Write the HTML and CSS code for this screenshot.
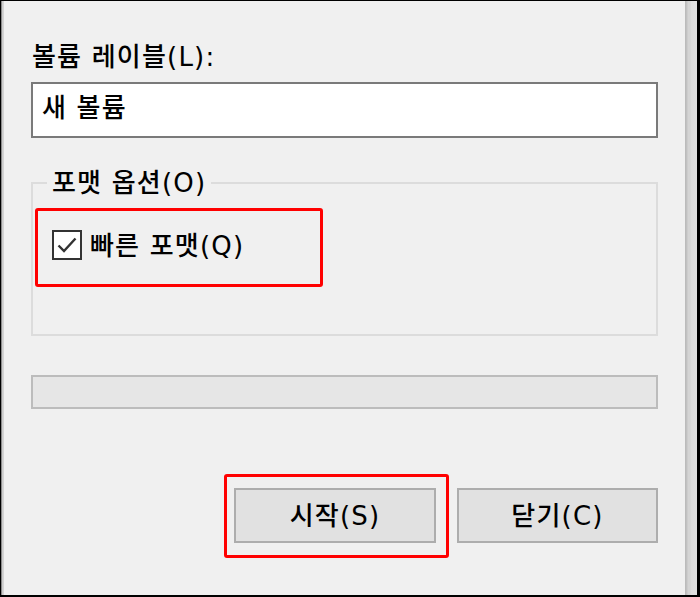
FILE: index.html
```html
<!DOCTYPE html>
<html lang="ko">
<head>
<meta charset="utf-8">
<title>포맷</title>
<link rel="stylesheet" href="styles.css">
</head>
<body>
<div class="screen">
  <div class="edge-left"></div>
  <div class="dialog">
    <div class="label">볼륨 레이블(L):</div>
    <div class="textbox">새 볼륨</div>
    <fieldset class="group">
      <legend class="legend">포맷 옵션(O)</legend>
      <div class="group-body">
        <div class="highlight hl-check">
          <div class="check-row">
            <span class="checkbox">
              <svg width="26" height="26" viewBox="0 0 26 26"><polyline points="4.5,13.5 10,19 21.5,6.5" fill="none" stroke="#333" stroke-width="2.4"/></svg>
            </span>
            <span class="check-text">빠른 포맷(Q)</span>
          </div>
        </div>
      </div>
    </fieldset>
    <div class="progress"></div>
    <div class="buttons">
      <div class="highlight hl-btn">
        <div class="btn btn-start">시작(S)</div>
      </div>
      <div class="btn btn-close">닫기(C)</div>
    </div>
  </div>
  <div class="edge-right"></div>
</div>
</body>
</html>
```
FILE: styles.css
```css
html, body {
  margin: 0;
  padding: 0;
  background: #000;
}
.screen {
  width: 700px;
  height: 597px;
  box-sizing: border-box;
  border-top: 1px solid #000;
  border-left: 1px solid #000;
  border-right: 3px solid #000;
  border-bottom: 2px solid #000;
  display: flex;
  font-family: "DejaVu Sans", "Noto Sans CJK KR", sans-serif;
  font-size: 26px;
  font-weight: 500;
  letter-spacing: 1.2px;
  color: #000;
}
.edge-left {
  width: 3px;
  background: linear-gradient(to right, #8a8a8a 0, #8a8a8a 1px, #c8c8c8 1px, #d8d8d8 3px);
}
.edge-right {
  width: 12px;
  background: linear-gradient(to right, #b8b8b8 0, #c4c4c4 2px, #d4d4d4 3px, #d4d4d4 5px, #dedede 6px, #e2e2e2 12px);
}
.dialog {
  flex: 1;
  background: #f0f0f0;
  padding: 0 27px;
  display: flex;
  flex-direction: column;
}
.label {
  margin-top: 40px;
  height: 32px;
  line-height: 32px;
  padding-left: 1px;
}
.textbox {
  margin-top: 9px;
  height: 56px;
  box-sizing: border-box;
  border: 2px solid #7a7a7a;
  background: #fff;
  padding: 0 9px;
  line-height: 48px;
}
.group {
  margin: 29px 0 0 0;
  padding: 0;
  border: 2px solid #dcdcdc;
  height: 169px;
  box-sizing: border-box;
  min-width: 0;
}
.legend {
  margin-left: 14px;
  padding: 0 5px;
  height: 32px;
  line-height: 32px;
}
.group-body {
  padding: 9px 0 0 2px;
}
.highlight {
  border: 3px solid #ff0000;
  border-radius: 3px;
  box-sizing: border-box;
}
.hl-check {
  width: 288px;
  height: 79px;
  padding: 19px 0 0 14px;
}
.check-row {
  display: flex;
  align-items: center;
  gap: 8px;
  height: 30px;
}
.checkbox {
  width: 30px;
  height: 30px;
  box-sizing: border-box;
  border: 2px solid #333;
  background: #fff;
  display: flex;
}
.check-text {
  line-height: 32px;
  margin-top: 2px;
}
.progress {
  margin-top: 39px;
  height: 34px;
  box-sizing: border-box;
  border: 2px solid #bcbcbc;
  background: #e6e6e6;
}
.buttons {
  margin-top: 65px;
  display: flex;
  justify-content: flex-end;
  align-items: flex-start;
  gap: 8px;
}
.hl-btn {
  padding: 11px 10px 12px 7px;
}
.btn {
  height: 55px;
  box-sizing: border-box;
  border: 2px solid #adadad;
  background: #e1e1e1;
  display: flex;
  align-items: center;
  justify-content: center;
  line-height: 32px;
}
.btn-start {
  width: 202px;
}
.btn-close {
  width: 201px;
  margin-top: 14px;
}
```
